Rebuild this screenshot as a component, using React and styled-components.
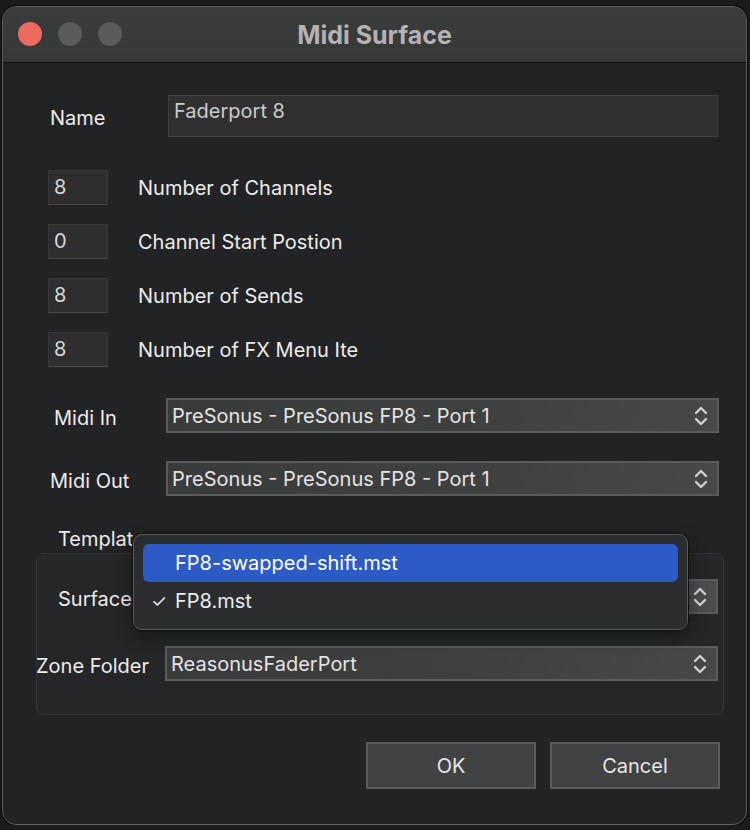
import React from "react";
import styled, { createGlobalStyle } from "styled-components";

const GlobalStyle = createGlobalStyle`
  html, body {
    margin: 0;
    padding: 0;
    background: #1b1b1c;
  }
  body {
    font-family: Inter, "Liberation Sans", sans-serif;
    -webkit-font-smoothing: antialiased;
  }
`;

const SMALL_FIELDS = [
  { value: "8", label: "Number of Channels" },
  { value: "0", label: "Channel Start Postion" },
  { value: "8", label: "Number of Sends" },
  { value: "8", label: "Number of FX Menu Ite" },
];

function Chevrons() {
  return (
    <ChevronSvg viewBox="0 0 14 20" width="14" height="20">
      <path d="M2 7 L7 2 L12 7" />
      <path d="M2 13 L7 18 L12 13" />
    </ChevronSvg>
  );
}

function SelectRow({ label, value, indent, top }) {
  return (
    <SelectLine $top={top}>
      <RowLabel $indent={indent}>{label}</RowLabel>
      <Select>
        <span>{value}</span>
        <Chevrons />
      </Select>
    </SelectLine>
  );
}

export default function App() {
  return (
    <>
      <GlobalStyle />
      <Window>
        <TitleBar>
          <Lights>
            <Light $color="#ec6a5e" />
            <Light $color="#5b5b5d" />
            <Light $color="#5b5b5d" />
          </Lights>
          <Title>Midi Surface</Title>
        </TitleBar>

        <Body>
          <NameRow>
            <RowLabel $indent={47}>Name</RowLabel>
            <NameInput>Faderport 8</NameInput>
          </NameRow>

          <SmallList>
            {SMALL_FIELDS.map((f) => (
              <SmallRow key={f.label}>
                <SmallInput>{f.value}</SmallInput>
                <SmallLabel>{f.label}</SmallLabel>
              </SmallRow>
            ))}
          </SmallList>

          <SelectRow label="Midi In" value="PreSonus - PreSonus FP8 - Port 1" indent={51} top={31} />
          <SelectRow label="Midi Out" value="PreSonus - PreSonus FP8 - Port 1" indent={47} top={28} />

          <GroupTitle>Template</GroupTitle>
          <GroupBox>
            <BoxRow $top={25}>
              <BoxLabel $indent={22}>Surface</BoxLabel>
              {/* pressed select lies under the open menu; only its arrows show */}
              <Select $pressed>
                <span />
                <Chevrons />
              </Select>
            </BoxRow>
            <BoxRow $top={32}>
              <BoxLabel $indent={0}>Zone Folder</BoxLabel>
              <Select>
                <span>ReasonusFaderPort</span>
                <Chevrons />
              </Select>
            </BoxRow>
          </GroupBox>

          <Buttons>
            <Button>OK</Button>
            <Button>Cancel</Button>
          </Buttons>
        </Body>

        <Popup>
          <MenuItem $active>
            <Check />
            FP8-swapped-shift.mst
          </MenuItem>
          <MenuItem>
            <Check>✓</Check>
            FP8.mst
          </MenuItem>
        </Popup>
      </Window>
    </>
  );
}

const Window = styled.div`
  position: relative;
  box-sizing: border-box;
  width: 745px;
  height: 819px;
  margin: 6px 0 0 2px;
  border: 1px solid #5e5e60;
  border-radius: 14px;
  background: #222325;
  overflow: hidden;
  box-shadow: 0 0 0 1px #0a0a0a;
`;

const TitleBar = styled.div`
  position: relative;
  display: flex;
  align-items: center;
  justify-content: center;
  height: 55px;
  background: linear-gradient(#3b3c3c, #373838);
  border-bottom: 1px solid #0c0c0c;
`;

const Lights = styled.div`
  position: absolute;
  left: 15px;
  top: 15px;
  display: flex;
  gap: 16px;
`;

const Light = styled.span`
  width: 24px;
  height: 24px;
  border-radius: 50%;
  background: ${(p) => p.$color};
`;

const Title = styled.div`
  font-size: 25px;
  font-weight: 700;
  color: #b3b3b3;
`;

const Body = styled.div`
  display: flex;
  flex-direction: column;
  color: #ececec;
  font-size: 20px;
`;

const RowLabel = styled.div`
  padding-left: ${(p) => p.$indent}px;
  padding-top: 4px;
  white-space: nowrap;
  color: #ececec;
`;

const NameRow = styled.div`
  display: grid;
  grid-template-columns: 165px 550px;
  align-items: center;
  margin-top: 32px;
`;

const NameInput = styled.div`
  box-sizing: border-box;
  height: 42px;
  padding: 3px 5px;
  background: #303030;
  border: 1px solid #404040;
  color: #cbcbcb;
`;

const SmallList = styled.div`
  display: flex;
  flex-direction: column;
  gap: 19px;
  margin-top: 33px;
  padding-left: 45px;
`;

const SmallRow = styled.div`
  display: flex;
  align-items: center;
  gap: 30px;
  height: 35px;
`;

const SmallInput = styled.div`
  box-sizing: border-box;
  width: 60px;
  height: 35px;
  padding: 4px 5px;
  background: #2e2e2e;
  border: 1px solid #383838;
  border-bottom-color: #4a4a4a;
  color: #d6d6d6;
`;

const SmallLabel = styled.div`
  color: #ececec;
`;

const SelectLine = styled.div`
  display: grid;
  grid-template-columns: 163px 553px;
  align-items: center;
  height: 35px;
  margin-top: ${(p) => p.$top}px;
`;

const Select = styled.div`
  box-sizing: border-box;
  display: flex;
  align-items: center;
  justify-content: space-between;
  height: 35px;
  padding: 0 9px 0 4px;
  border: 2px solid #5a5b5b;
  background: ${(p) =>
    p.$pressed
      ? "#4c4c4c"
      : "linear-gradient(100deg, #393a3a 0%, #3f4040 55%, #474848 100%)"};
  color: #e4e4e4;
  white-space: nowrap;
`;

const ChevronSvg = styled.svg`
  fill: none;
  stroke: #d0d0d0;
  stroke-width: 2.4;
  stroke-linecap: round;
  stroke-linejoin: round;
`;

const GroupTitle = styled.div`
  margin-top: 29px;
  padding-left: 55px;
  height: 28px;
  line-height: 28px;
  color: #ececec;
`;

const GroupBox = styled.div`
  box-sizing: border-box;
  margin: 0 0 0 33px;
  width: 688px;
  height: 162px;
  border: 1px solid #333436;
  border-radius: 7px;
  background: #252628;
`;

const BoxRow = styled.div`
  display: grid;
  grid-template-columns: 129px 553px;
  align-items: center;
  height: 35px;
  margin-top: ${(p) => p.$top}px;
  margin-left: -1px;
`;

const BoxLabel = styled(RowLabel)``;

const Buttons = styled.div`
  display: flex;
  justify-content: flex-end;
  gap: 14px;
  margin-top: 27px;
  padding-right: 26px;
`;

const Button = styled.div`
  box-sizing: border-box;
  display: flex;
  align-items: center;
  justify-content: center;
  width: 170px;
  height: 47px;
  border: 2px solid #5a5b5b;
  background: #414242;
  color: #e6e6e6;
  font-size: 20px;
`;

const Popup = styled.div`
  position: absolute;
  left: 130px;
  top: 527px;
  box-sizing: border-box;
  width: 555px;
  height: 96px;
  padding: 9px 9px;
  border: 1px solid #58595b;
  border-radius: 9px;
  background: #2c2d2f;
  box-shadow: 0 0 0 1px #111, 0 6px 18px rgba(0, 0, 0, 0.45);
  color: #ececec;
  font-size: 20px;
`;

const MenuItem = styled.div`
  display: flex;
  align-items: center;
  height: 38px;
  padding-left: 8px;
  border-radius: 6px;
  background: ${(p) => (p.$active ? "#2d5bc5" : "transparent")};
  color: ${(p) => (p.$active ? "#ffffff" : "#ececec")};
`;

const Check = styled.span`
  display: inline-block;
  width: 24px;
  font-size: 18px;
`;
